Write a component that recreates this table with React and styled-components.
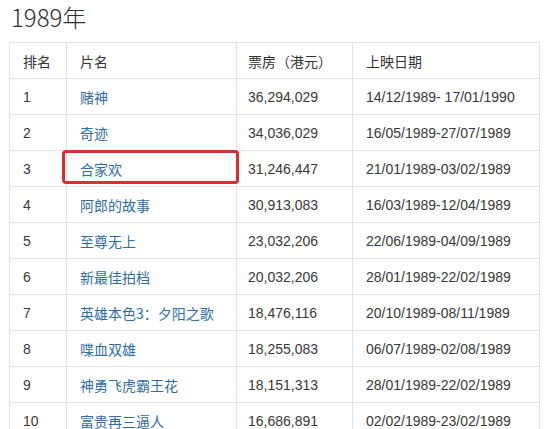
import styled, { createGlobalStyle } from "styled-components";

const GlobalStyle = createGlobalStyle`
  html, body {
    margin: 0;
    padding: 0;
    background: #fff;
  }
  body {
    font-family: "Liberation Sans", "Noto Sans CJK SC", sans-serif;
    color: #333;
  }
`;

const Page = styled.div`
  width: 546px;
  height: 429px;
  overflow: hidden;
  padding: 0 0 0 9px;
  box-sizing: border-box;
`;

const Title = styled.h2`
  margin: 0;
  padding: 3px 0 0 2px;
  height: 42px;
  box-sizing: border-box;
  font-family: "Noto Sans CJK SC", sans-serif;
  font-weight: 300;
  font-size: 24px;
  line-height: 28px;
  color: #2f2f2f;
`;

const TableWrap = styled.div`
  position: relative;
  width: 530px;
`;

const Table = styled.table`
  width: 530px;
  border-collapse: collapse;
  table-layout: fixed;
  font-size: 14px;
  border: 1px solid #e2e2e2;
`;

const Cell = styled.td`
  height: 35px;
  padding: 0 0 0 ${(p) => p.$pad || 13}px;
  border: 1px solid #e2e2e2;
  white-space: nowrap;
  vertical-align: middle;
  color: ${(p) => (p.$link ? "#2e6da4" : "#383838")};
  font-family: ${(p) =>
    p.$cjk
      ? `"Noto Sans CJK SC", sans-serif`
      : `"Liberation Sans", "Noto Sans CJK SC", sans-serif`};
`;

const HeadCell = styled(Cell).attrs({ as: "th" })`
  font-weight: 400;
  text-align: left;
  color: #333;
`;

const Highlight = styled.div`
  position: absolute;
  left: 53px;
  top: 108px;
  width: 177px;
  height: 34px;
  box-sizing: border-box;
  border: 3px solid #d8302c;
  border-radius: 4px;
`;

const films = [
  ["1", "赌神", "36,294,029", "14/12/1989- 17/01/1990"],
  ["2", "奇迹", "34,036,029", "16/05/1989-27/07/1989"],
  ["3", "合家欢", "31,246,447", "21/01/1989-03/02/1989"],
  ["4", "阿郎的故事", "30,913,083", "16/03/1989-12/04/1989"],
  ["5", "至尊无上", "23,032,206", "22/06/1989-04/09/1989"],
  ["6", "新最佳拍档", "20,032,206", "28/01/1989-22/02/1989"],
  ["7", "英雄本色3：夕阳之歌", "18,476,116", "20/10/1989-08/11/1989"],
  ["8", "喋血双雄", "18,255,083", "06/07/1989-02/08/1989"],
  ["9", "神勇飞虎霸王花", "18,151,313", "28/01/1989-22/02/1989"],
  ["10", "富贵再三逼人", "16,686,891", "02/02/1989-23/02/1989"],
];

export default function App() {
  return (
    <Page>
      <GlobalStyle />
      <Title>1989年</Title>
      <TableWrap>
        <Table>
          <colgroup>
            <col style={{ width: 57 }} />
            <col style={{ width: 170 }} />
            <col style={{ width: 116 }} />
            <col style={{ width: 187 }} />
          </colgroup>
          <thead>
            <tr>
              <HeadCell $cjk>排名</HeadCell>
              <HeadCell $cjk>片名</HeadCell>
              <HeadCell $cjk $pad={11}>票房（港元）</HeadCell>
              <HeadCell $cjk>上映日期</HeadCell>
            </tr>
          </thead>
          <tbody>
            {films.map(([rank, name, box, date]) => (
              <tr key={rank}>
                <Cell>{rank}</Cell>
                <Cell $cjk $link>{name}</Cell>
                <Cell $pad={11}>{box}</Cell>
                <Cell>{date}</Cell>
              </tr>
            ))}
          </tbody>
        </Table>
        <Highlight />
      </TableWrap>
    </Page>
  );
}
